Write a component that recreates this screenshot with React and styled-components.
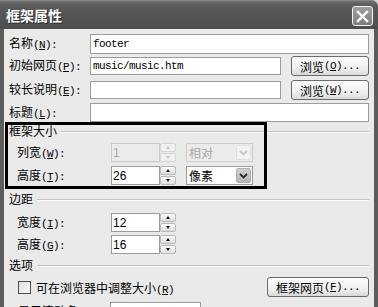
import React from "react";
import styled, { createGlobalStyle } from "styled-components";

const Global = createGlobalStyle`
  html, body { margin: 0; padding: 0; background: #d2d2d2; overflow: hidden; }
  body { font-family: "Noto Sans CJK SC", "Liberation Sans", sans-serif; font-size: 12px; color: #000; }
`;

const Window = styled.div`
  width: 378px;
  height: 307px;
  overflow: hidden;
  display: flex;
  flex-direction: column;
  background: #5c5c5c;
  border-top-right-radius: 7px;
`;

const TitleBar = styled.div`
  height: 29px;
  flex: none;
  display: flex;
  align-items: flex-start;
  padding: 0 5px 0 6px;
  background: linear-gradient(#8e8e8e 0, #6a6a6a 2px, #5a5a5a 6px, #545454 60%, #4d4d4d 100%);
  border-top-right-radius: 7px;
`;

const Title = styled.div`
  margin-top: 6px;
  color: #fff;
  font-weight: 700;
  font-size: 14px;
  line-height: 18px;
  text-shadow: 1px 1px 0 #2e2e2e;
`;

const CloseBtn = styled.div`
  margin-left: auto;
  margin-top: 6px;
  width: 21px;
  height: 20px;
  box-sizing: border-box;
  border: 1px solid #f4f4f4;
  border-radius: 3px;
  background: linear-gradient(#a0a0a0, #7c7c7c);
  display: flex;
  align-items: center;
  justify-content: center;
`;

const Body = styled.div`
  flex: 1;
  margin: 0 4px;
  background: #eaeaea;
  padding: 5px 5px 0 5px;
  display: flex;
  flex-direction: column;
`;

const Row = styled.div`
  flex: none;
  display: flex;
  align-items: center;
  height: ${(p) => p.$h || 20}px;
  margin-top: ${(p) => p.$mt || 0}px;
  padding-left: ${(p) => p.$indent || 0}px;
`;

const Label = styled.div`
  width: ${(p) => p.$w}px;
  flex: none;
  white-space: nowrap;
  font-size: 12px;
  line-height: 14px;
  color: #000;
`;

const Lat = styled.span`
  font-family: "Liberation Mono", monospace;
  font-size: 11px;
  letter-spacing: -0.6px;
`;

const TextBox = styled.div`
  flex: 1;
  min-width: 0;
  height: ${(p) => p.$h || 20}px;
  box-sizing: border-box;
  border: 1px solid #9c9c9c;
  background: #fff;
  padding-left: 2px;
  display: flex;
  align-items: center;
  font-family: "Liberation Mono", monospace;
  font-size: 11px;
  letter-spacing: -0.6px;
  color: #000;
`;

const Btn = styled.div`
  flex: none;
  width: ${(p) => p.$w}px;
  height: 20px;
  margin-left: ${(p) => (typeof p.$ml === "number" ? `${p.$ml}px` : p.$ml || 0)};
  box-sizing: border-box;
  border: 1px solid #6c6c6c;
  border-radius: 3px;
  background: linear-gradient(#fdfdfd, #efefef 65%, #d8d8d8);
  display: flex;
  align-items: center;
  justify-content: center;
  font-size: 12px;
  color: #000;
  white-space: nowrap;
`;

const Section = styled.div`
  position: relative;
  display: flex;
  flex-direction: column;
`;

const Highlight = styled.div`
  position: absolute;
  left: -4px;
  top: 0;
  width: 262px;
  height: 67px;
  box-sizing: border-box;
  border: 3px solid #000;
  pointer-events: none;
`;

const GroupHead = styled.div`
  flex: none;
  display: flex;
  align-items: center;
  height: 12px;
  margin-top: ${(p) => p.$mt || 0}px;
  font-size: 12px;
  line-height: 12px;
  white-space: nowrap;
  &::after {
    content: "";
    flex: 1;
    height: 1px;
    margin-left: 4px;
    background: #c2c2c2;
    box-shadow: 0 1px 0 #fbfbfb;
  }
`;

const NumBox = styled.div`
  width: 49px;
  height: 19px;
  box-sizing: border-box;
  border: 1px solid ${(p) => (p.$off ? "#c9c9c9" : "#9c9c9c")};
  background: ${(p) => (p.$off ? "#ebebeb" : "#fff")};
  color: ${(p) => (p.$off ? "#a8a8a8" : "#000")};
  font-family: "Liberation Sans", sans-serif;
  font-size: 12px;
  padding-left: 1px;
  display: flex;
  align-items: center;
`;

const Spin = styled.div`
  width: 16px;
  height: 19px;
  display: flex;
  flex-direction: column;
  gap: 1px;
`;

const SpinBtn = styled.div`
  flex: 1;
  box-sizing: border-box;
  border: 1px solid ${(p) => (p.$off ? "#d6d6d6" : "#b8b8b8")};
  border-radius: 2px;
  background: ${(p) => (p.$off ? "#efefef" : "linear-gradient(#fbfbfb, #dfdfdf)")};
  display: flex;
  align-items: center;
  justify-content: center;
`;

const Tri = styled.span`
  width: 0;
  height: 0;
  border-left: 2.5px solid transparent;
  border-right: 2.5px solid transparent;
  ${(p) =>
    p.$down
      ? `border-top: 3px solid ${p.$off ? "#c4c4c4" : "#111"};`
      : `border-bottom: 3px solid ${p.$off ? "#c4c4c4" : "#111"};`}
`;

const Select = styled.div`
  width: ${(p) => p.$w}px;
  height: ${(p) => p.$h || 19}px;
  margin-left: ${(p) => p.$ml || 0}px;
  box-sizing: border-box;
  border: 1px solid ${(p) => (p.$off ? "#cbcbcb" : "#9c9c9c")};
  background: ${(p) => (p.$off ? "#ececec" : "#fff")};
  color: ${(p) => (p.$off ? "#a8a8a8" : "#000")};
  display: flex;
  align-items: center;
  padding-left: 2px;
  font-size: 12px;
`;

const DropBtn = styled.div`
  margin-left: auto;
  margin-right: 1px;
  width: 15px;
  height: 15px;
  box-sizing: border-box;
  border-radius: 2px;
  border: 1px solid ${(p) => (p.$off ? "#e0e0e0" : "#b0b0b0")};
  background: ${(p) => (p.$off ? "#f3f3f3" : "linear-gradient(#cfcfcf, #b6b6b6)")};
  display: flex;
  align-items: center;
  justify-content: center;
`;

const Check = styled.div`
  width: 13px;
  height: 13px;
  flex: none;
  box-sizing: border-box;
  border: 1px solid #4e4e4e;
  background: linear-gradient(135deg, #d9d9d9, #fdfdfd);
`;

const CheckText = styled.div`
  margin-left: 5px;
  white-space: nowrap;
  font-size: 12px;
`;

const Chevron = ({ off }) => (
  <svg width="9" height="6" viewBox="0 0 9 6">
    <polyline points="1,1 4.5,4.5 8,1" fill="none" stroke={off ? "#c6c6c6" : "#2a2a2a"} strokeWidth="1.8" />
  </svg>
);

const Spinner = ({ off }) => (
  <Spin>
    <SpinBtn $off={off}><Tri $off={off} /></SpinBtn>
    <SpinBtn $off={off}><Tri $off={off} $down /></SpinBtn>
  </Spin>
);

const M = ({ k, tail = ":" }) => (
  <Lat>(<u>{k}</u>){tail}</Lat>
);

export default function App() {
  return (
    <>
      <Global />
      <Window>
        <TitleBar>
          <Title>框架属性</Title>
          <CloseBtn>
            <svg width="13" height="13" viewBox="0 0 13 13">
              <path d="M2 2 L11 11 M11 2 L2 11" stroke="#fff" strokeWidth="2.4" strokeLinecap="square" />
            </svg>
          </CloseBtn>
        </TitleBar>
        <Body>
          <Row $h={20}>
            <Label $w={81}>名称<M k="N" /></Label>
            <TextBox $h={20}>footer</TextBox>
          </Row>
          <Row $h={20} $mt={2}>
            <Label $w={81}>初始网页<M k="P" /></Label>
            <TextBox $h={18}>music/music.htm</TextBox>
            <Btn $w={78} $ml={10}>浏览<M k="O" tail="..." /></Btn>
          </Row>
          <Row $h={20} $mt={4}>
            <Label $w={81}>较长说明<M k="E" /></Label>
            <TextBox $h={18} />
            <Btn $w={78} $ml={10}>浏览<M k="W" tail="..." /></Btn>
          </Row>
          <Row $h={19} $mt={3}>
            <Label $w={81}>标题<M k="L" /></Label>
            <TextBox $h={19} />
          </Row>

          <Section>
            <GroupHead $mt={3}>框架大小</GroupHead>
            <Row $h={19} $mt={6} $indent={8}>
              <Label $w={94}>列宽<M k="W" /></Label>
              <NumBox $off>1</NumBox>
              <Spinner off />
              <Select $w={67} $ml={10} $off>
                相对
                <DropBtn $off><Chevron off /></DropBtn>
              </Select>
            </Row>
            <Row $h={19} $mt={4} $indent={8}>
              <Label $w={94}>高度<M k="T" /></Label>
              <NumBox>26</NumBox>
              <Spinner />
              <Select $w={67} $ml={10}>
                像素
                <DropBtn><Chevron /></DropBtn>
              </Select>
            </Row>
            <Highlight />
          </Section>

          <GroupHead $mt={8}>边距</GroupHead>
          <Row $h={19} $mt={8} $indent={8}>
            <Label $w={94}>宽度<M k="I" /></Label>
            <NumBox>12</NumBox>
            <Spinner />
          </Row>
          <Row $h={19} $mt={3} $indent={8}>
            <Label $w={94}>高度<M k="G" /></Label>
            <NumBox>16</NumBox>
            <Spinner />
          </Row>

          <GroupHead $mt={5}>选项</GroupHead>
          <Row $h={20} $mt={6} $indent={9}>
            <Check />
            <CheckText>可在浏览器中调整大小<M k="R" tail="" /></CheckText>
            <Btn $w={102} $ml="auto">框架网页<M k="F" tail="..." /></Btn>
          </Row>
          <Row $h={20} $mt={5} $indent={9}>
            <Label $w={92}>显示滚动条<M k="S" /></Label>
            <Select $w={91} $h={20}>不显示</Select>
          </Row>
        </Body>
      </Window>
    </>
  );
}
